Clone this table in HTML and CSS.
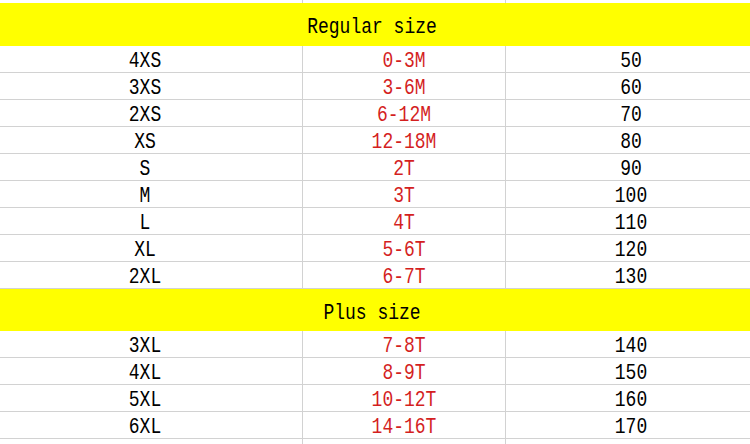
FILE: index.html
```html
<!DOCTYPE html>
<html>
<head>
<meta charset="utf-8">
<link rel="stylesheet" href="styles.css">
</head>
<body>
<div class="sheet">
  <div class="row spacer"><div class="c1"></div><div class="c2"></div><div class="c3"></div></div>
  <div class="band band-top"><span class="t">Regular size</span></div>
  <div class="row"><div class="c1"><span class="t">4XS</span></div><div class="c2"><span class="t">0-3M</span></div><div class="c3"><span class="t">50</span></div></div>
  <div class="row"><div class="c1"><span class="t">3XS</span></div><div class="c2"><span class="t">3-6M</span></div><div class="c3"><span class="t">60</span></div></div>
  <div class="row"><div class="c1"><span class="t">2XS</span></div><div class="c2"><span class="t">6-12M</span></div><div class="c3"><span class="t">70</span></div></div>
  <div class="row"><div class="c1"><span class="t">XS</span></div><div class="c2"><span class="t">12-18M</span></div><div class="c3"><span class="t">80</span></div></div>
  <div class="row"><div class="c1"><span class="t">S</span></div><div class="c2"><span class="t">2T</span></div><div class="c3"><span class="t">90</span></div></div>
  <div class="row"><div class="c1"><span class="t">M</span></div><div class="c2"><span class="t">3T</span></div><div class="c3"><span class="t">100</span></div></div>
  <div class="row"><div class="c1"><span class="t">L</span></div><div class="c2"><span class="t">4T</span></div><div class="c3"><span class="t">110</span></div></div>
  <div class="row"><div class="c1"><span class="t">XL</span></div><div class="c2"><span class="t">5-6T</span></div><div class="c3"><span class="t">120</span></div></div>
  <div class="row"><div class="c1"><span class="t">2XL</span></div><div class="c2"><span class="t">6-7T</span></div><div class="c3"><span class="t">130</span></div></div>
  <div class="band band-plus"><span class="t">Plus size</span></div>
  <div class="row"><div class="c1"><span class="t">3XL</span></div><div class="c2"><span class="t">7-8T</span></div><div class="c3"><span class="t">140</span></div></div>
  <div class="row"><div class="c1"><span class="t">4XL</span></div><div class="c2"><span class="t">8-9T</span></div><div class="c3"><span class="t">150</span></div></div>
  <div class="row"><div class="c1"><span class="t">5XL</span></div><div class="c2"><span class="t">10-12T</span></div><div class="c3"><span class="t">160</span></div></div>
  <div class="row"><div class="c1"><span class="t">6XL</span></div><div class="c2"><span class="t">14-16T</span></div><div class="c3"><span class="t">170</span></div></div>
  <div class="row"><div class="c1"></div><div class="c2"></div><div class="c3"></div></div>
</div>
</body>
</html>
```
FILE: styles.css
```css
html, body {
  margin: 0;
  padding: 0;
  background: #ffffff;
}
body {
  width: 750px;
  height: 444px;
  overflow: hidden;
}
.sheet {
  width: 750px;
  font-family: "Liberation Mono", "DejaVu Sans Mono", monospace;
  font-size: 18px;
  color: #000000;
}
.t {
  display: inline-block;
  line-height: 1;
  transform: scaleY(1.18);
}
.row {
  display: grid;
  grid-template-columns: 303px 203px 1fr;
  height: 27px;
  box-sizing: border-box;
  border-bottom: 1px solid #d2d2d2;
}
.row > div {
  display: flex;
  align-items: center;
  justify-content: center;
  border-right: 1px solid #d2d2d2;
  padding-top: 3px;
}
.row .c1 {
  padding-right: 12px;
}
.row .c2 {
  color: #d41f1f;
}
.row .c3 {
  border-right: none;
  padding-left: 6px;
}
.spacer {
  height: 3px;
  border-bottom: none;
}
.band {
  background: #ffff00;
  display: flex;
  align-items: center;
  justify-content: center;
  padding-right: 6px;
  padding-top: 5px;
  box-sizing: border-box;
}
.band-top {
  height: 43px;
}
.band-plus {
  height: 42px;
}
```
